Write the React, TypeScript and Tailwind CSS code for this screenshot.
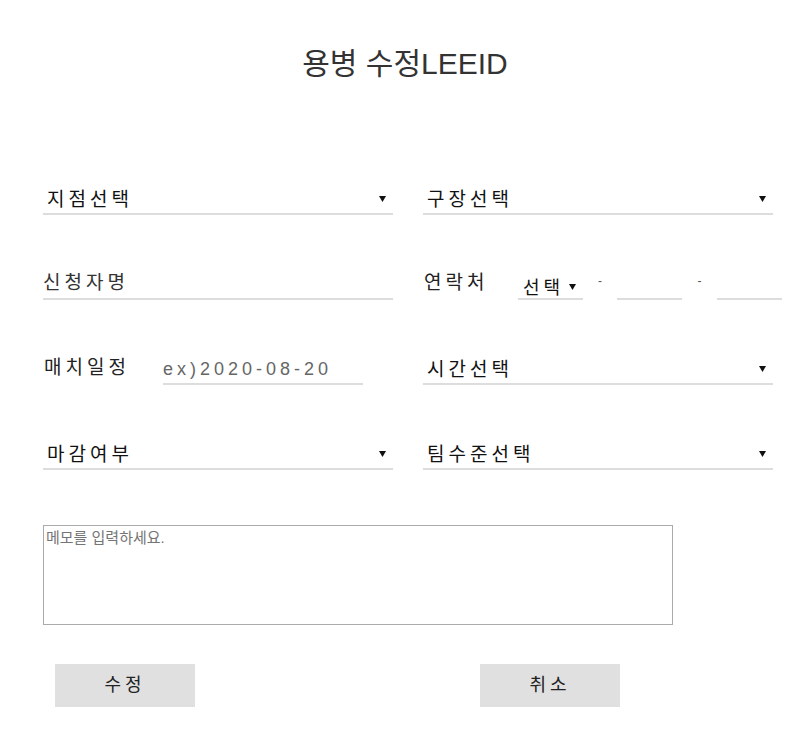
import { useState } from 'react';

function Arrow() {
  return (
    <svg width="7" height="6" viewBox="0 0 7 6" className="mb-[8px] shrink-0">
      <polygon points="0,0 7,0 3.5,6" fill="#111" />
    </svg>
  );
}

function SelectBox({ label }: { label: string }) {
  return (
    <div className="flex h-[36px] items-end justify-between border-b-2 border-[#ddd] pb-[3px] pl-[4px] pr-[7px]">
      <span className="text-[19px] leading-[20px] tracking-[4px] text-[#111]">{label}</span>
      <Arrow />
    </div>
  );
}

export default function App() {
  const [memo, setMemo] = useState('');

  return (
    <div className="min-h-[743px] w-full bg-white pt-[44px] font-['Liberation_Sans','Noto_Sans_CJK_KR',sans-serif] text-[#222]">
      <h1 className="text-center text-[30px] leading-[40px] text-[#333]">용병 수정LEEID</h1>

      <div className="mt-[95px] px-[43px]">
        <div className="grid grid-cols-[350px_350px] gap-x-[30px] gap-y-[49px]">
          <SelectBox label="지점선택" />
          <SelectBox label="구장선택" />

          <div className="flex h-[36px] items-end border-b-2 border-[#ddd] pb-[5px]">
            <input
              className="h-[20px] w-full text-[19px] leading-[20px] tracking-[4px] outline-none placeholder:text-[#333]"
              placeholder="신청자명"
            />
          </div>
          <div className="flex h-[36px] items-end">
            <span className="w-[95px] shrink-0 pb-[7px] pl-[1px] text-[19px] leading-[20px] tracking-[4px] text-[#222]">연락처</span>
            <div className="flex h-full w-[65px] shrink-0 items-end justify-between border-b-2 border-[#ddd] pl-[5px] pr-[7px]">
              <span className="text-[18px] leading-[20px] tracking-[4px] text-[#111]">선택</span>
              <Arrow />
            </div>
            <span className="w-[34px] shrink-0 pb-[12px] text-center text-[12px] leading-[14px] text-[#555]">-</span>
            <input className="h-full w-[65px] shrink-0 border-b-2 border-[#ddd] outline-none" />
            <span className="w-[35px] shrink-0 pb-[12px] text-center text-[12px] leading-[14px] text-[#555]">-</span>
            <input className="h-full w-[65px] shrink-0 border-b-2 border-[#ddd] outline-none" />
          </div>

          <div className="flex h-[36px] items-end">
            <span className="w-[120px] shrink-0 pb-[7px] pl-[1px] text-[19px] leading-[20px] tracking-[4px] text-[#222]">매치일정</span>
            <div className="flex h-full w-[200px] shrink-0 items-end border-b-2 border-[#ddd] pb-[4px]">
              <input
                className="h-[20px] w-full text-[18px] leading-[20px] tracking-[4px] outline-none placeholder:text-[#666]"
                placeholder="ex)2020-08-20"
              />
            </div>
          </div>
          <SelectBox label="시간선택" />

          <SelectBox label="마감여부" />
          <SelectBox label="팀수준선택" />
        </div>

        <textarea
          value={memo}
          onChange={(e) => setMemo(e.target.value)}
          placeholder="메모를 입력하세요."
          className="mt-[55px] block h-[100px] w-[630px] resize-none border border-[#aaa] p-[2px] text-[15px] leading-[19px] outline-none placeholder:text-[#757575]"
        />

        <div className="mt-[39px] flex gap-[285px] pl-[12px]">
          <button className="h-[43px] w-[140px] bg-[#e0e0e0] text-[18px] tracking-[4px] text-[#222]">수정</button>
          <button className="h-[43px] w-[140px] bg-[#e0e0e0] text-[18px] tracking-[4px] text-[#222]">취소</button>
        </div>
      </div>
    </div>
  );
}
